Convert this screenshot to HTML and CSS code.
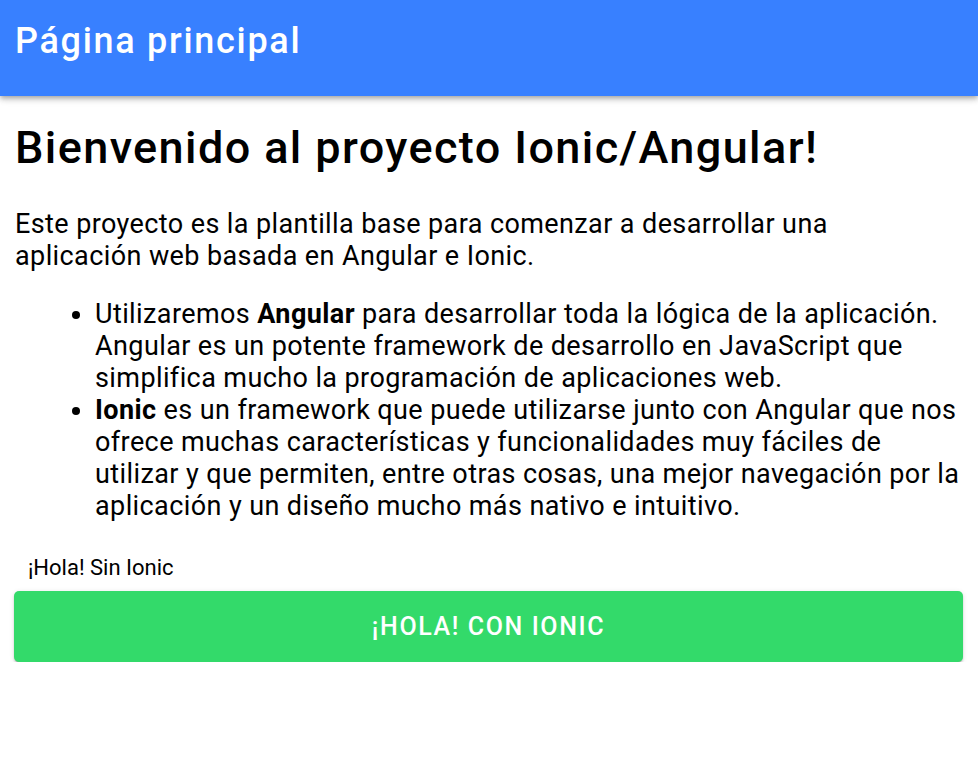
FILE: index.html
```html
<!DOCTYPE html>
<html lang="es">
<head>
<meta charset="utf-8">
<title>Página principal</title>
<link rel="stylesheet" href="styles.css">
</head>
<body>
<header class="toolbar">
  <div class="title">Página principal</div>
</header>
<main class="content">
  <h1 class="heading">Bienvenido al proyecto Ionic/Angular!</h1>
  <p class="intro">Este proyecto es la plantilla base para comenzar a desarrollar una aplicación web basada en Angular e Ionic.</p>
  <ul class="list">
    <li>Utilizaremos <b>Angular</b> para desarrollar toda la lógica de la aplicación. Angular es un potente framework de desarrollo en JavaScript que simplifica mucho la programación de aplicaciones web.</li>
    <li><b>Ionic</b> es un framework que puede utilizarse junto con Angular que nos ofrece muchas características y funcionalidades muy fáciles de utilizar y que permiten, entre otras cosas, una mejor navegación por la aplicación y un diseño mucho más nativo e intuitivo.</li>
  </ul>
  <div class="plain-btn">¡Hola! Sin Ionic</div>
  <button class="ion-btn">¡Hola! Con Ionic</button>
</main>
</body>
</html>
```

FILE: styles.css
```css
* { box-sizing: border-box; }
html, body { margin: 0; padding: 0; background: #fff; }
body {
  font-family: Roboto, "Noto Sans", sans-serif;
  color: #000;
}
.toolbar {
  height: 96px;
  background: #3880ff;
  display: flex;
  align-items: flex-start;
  padding: 20px 15px 0;
  box-shadow: 0 2px 4px -1px rgba(0,0,0,0.2), 0 4px 5px 0 rgba(0,0,0,0.14), 0 1px 10px 0 rgba(0,0,0,0.12);
  position: relative;
  z-index: 2;
}
.title {
  color: #fff;
  font-size: 36px;
  line-height: 42px;
  font-weight: 500;
  letter-spacing: 1.7px;
}
.content {
  padding: 26px 15px 0 15px;
}
.heading {
  margin: 0;
  font-size: 45px;
  font-weight: 500;
  line-height: 52px;
  letter-spacing: 1.4px;
}
.intro {
  margin: 34px 0 0;
  padding-right: 40px;
  font-size: 27px;
  line-height: 32px;
  letter-spacing: 0.4px;
}
.list {
  margin: 26px 0 0;
  padding-left: 80px;
  font-size: 27px;
  line-height: 32px;
  letter-spacing: 0.4px;
}
.list b { font-weight: 700; }
.plain-btn {
  margin: 34px 0 0 13px;
  font-size: 22px;
  line-height: 24px;
}
.ion-btn {
  display: block;
  width: calc(100% + 1px);
  margin: 11px 0 0 -1px;
  height: 71px;
  border: none;
  border-radius: 5px;
  background: #33da6a;
  color: #fff;
  font-family: Roboto, sans-serif;
  font-size: 25px;
  font-weight: 500;
  text-transform: uppercase;
  letter-spacing: 1.6px;
  box-shadow: 0 3px 1px -2px rgba(0,0,0,0.2), 0 2px 2px 0 rgba(0,0,0,0.14), 0 1px 5px 0 rgba(0,0,0,0.12);
}
```
